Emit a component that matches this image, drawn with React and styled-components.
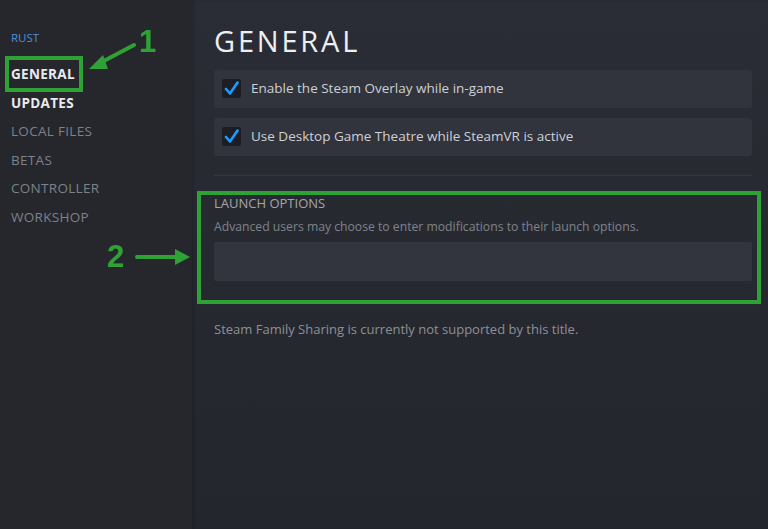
import React from 'react';
import styled, { createGlobalStyle } from 'styled-components';

const GlobalStyle = createGlobalStyle`
  html, body {
    margin: 0;
    padding: 0;
    background: #24262d;
  }
  body {
    font-family: 'Open Sans', 'Noto Sans', sans-serif;
  }
`;

const green = '#2fa236';

const Page = styled.div`
  position: relative;
  display: flex;
  width: 768px;
  height: 529px;
  overflow: hidden;
`;

const Sidebar = styled.nav`
  width: 192px;
  flex: none;
  background: #25272d;
  padding: 30px 0 0 11px;
  box-sizing: border-box;
  display: flex;
  flex-direction: column;
`;

const GameTitle = styled.div`
  font-size: 11.5px;
  color: #4d8fd8;
  height: 22px;
  margin-bottom: 8px;
`;

const NavItem = styled.div`
  font-size: 13.5px;
  font-weight: ${(p) => (p.bright ? 700 : 500)};
  color: ${(p) => (p.bright ? '#e8eaec' : '#7d8188')};
  height: 28.5px;
  line-height: 28.5px;
  letter-spacing: 0.3px;
`;

const Main = styled.main`
  flex: 1;
  background: linear-gradient(180deg, #2a2d35 0%, #262830 60%, #24262e 100%);
  padding: 24px 16px 0 22px;
  display: flex;
  flex-direction: column;
  box-shadow: inset 2px 0 3px rgba(0, 0, 0, 0.15);
`;

const Heading = styled.h1`
  margin: 0 0 12px 0;
  font-family: 'Open Sans', sans-serif;
  font-weight: 400;
  font-size: 29px;
  letter-spacing: 2.8px;
  color: #eceef0;
  line-height: 34px;
`;

const Toggles = styled.div`
  display: flex;
  flex-direction: column;
  gap: 10px;
`;

const ToggleRow = styled.label`
  display: flex;
  align-items: center;
  gap: 10px;
  height: 38px;
  background: #31343c;
  border-radius: 3px;
  padding: 0 8px;
  font-size: 13.5px;
  color: #cdd0d5;
  padding-bottom: 2px;
  box-sizing: border-box;
`;

const Box = styled.span`
  width: 19px;
  height: 19px;
  background: #1c1e24;
  border-radius: 2px;
  display: flex;
  align-items: center;
  justify-content: center;
`;

const Divider = styled.div`
  height: 1px;
  background: #33363e;
  margin: 19px 0 0 0;
`;

const LaunchSection = styled.section`
  margin-top: 18px;
  display: flex;
  flex-direction: column;
`;

const SectionLabel = styled.div`
  font-size: 13px;
  color: #a3a6ab;
  line-height: 18px;
`;

const SectionHint = styled.div`
  font-size: 12.2px;
  color: #7f838a;
  margin-top: 7px;
  line-height: 16px;
`;

const LaunchInput = styled.div`
  height: 39px;
  margin-top: 7px;
  background: #32353d;
  border-radius: 2px;
`;

const Footnote = styled.p`
  margin: 39px 0 0 0;
  font-size: 13px;
  color: #8c9096;
`;

const HighlightBox = styled.div`
  position: absolute;
  left: ${(p) => p.x}px;
  top: ${(p) => p.y}px;
  width: ${(p) => p.w}px;
  height: ${(p) => p.h}px;
  box-sizing: border-box;
  border: 4px solid ${green};
  pointer-events: none;
`;

const Marker = styled.div`
  position: absolute;
  left: ${(p) => p.x}px;
  top: ${(p) => p.y}px;
  font-family: 'Liberation Sans', Arial, sans-serif;
  font-weight: 700;
  font-size: 31px;
  line-height: 31px;
  color: ${green};
`;

const ArrowSvg = styled.svg`
  position: absolute;
  left: 0;
  top: 0;
  pointer-events: none;
`;

const Check = () => (
  <svg width="15" height="15" viewBox="0 0 15 15">
    <path d="M2 8 L6 12.5 L13.5 1.5" fill="none" stroke="#1a9fff" strokeWidth="2.6" strokeLinecap="round" strokeLinejoin="round" />
  </svg>
);

const App = () => (
  <>
    <GlobalStyle />
    <Page>
      <Sidebar>
        <GameTitle>RUST</GameTitle>
        <NavItem bright>GENERAL</NavItem>
        <NavItem bright>UPDATES</NavItem>
        <NavItem>LOCAL FILES</NavItem>
        <NavItem>BETAS</NavItem>
        <NavItem>CONTROLLER</NavItem>
        <NavItem>WORKSHOP</NavItem>
      </Sidebar>
      <Main>
        <Heading>GENERAL</Heading>
        <Toggles>
          <ToggleRow>
            <Box><Check /></Box>
            Enable the Steam Overlay while in-game
          </ToggleRow>
          <ToggleRow>
            <Box><Check /></Box>
            Use Desktop Game Theatre while SteamVR is active
          </ToggleRow>
        </Toggles>
        <Divider />
        <LaunchSection>
          <SectionLabel>LAUNCH OPTIONS</SectionLabel>
          <SectionHint>Advanced users may choose to enter modifications to their launch options.</SectionHint>
          <LaunchInput />
        </LaunchSection>
        <Footnote>Steam Family Sharing is currently not supported by this title.</Footnote>
      </Main>

      <HighlightBox x={5} y={56} w={78} h={36} />
      <HighlightBox x={197} y={191} w={564} h={113} />
      <Marker x={139} y={26}>1</Marker>
      <Marker x={107} y={241}>2</Marker>
      <ArrowSvg width="768" height="529">
        <g stroke={green} strokeWidth="4" fill={green} strokeLinecap="round">
          <line x1="134" y1="45" x2="100" y2="63" />
          <polygon points="89,69 103,55 108,69" stroke="none" />
          <line x1="137" y1="257" x2="176" y2="257" />
          <polygon points="190,257 175,249 175,265" stroke="none" />
        </g>
      </ArrowSvg>
    </Page>
  </>
);

export default App;
